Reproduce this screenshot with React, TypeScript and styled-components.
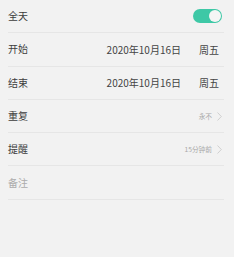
import * as React from 'react'
import styled, { createGlobalStyle } from 'styled-components'

const Global = createGlobalStyle`
  html, body {
    margin: 0;
    padding: 0;
    background: #f2f2f2;
  }
  body {
    font-family: "Noto Sans CJK SC", "Noto Sans", sans-serif;
  }
`

const Page = styled.div`
  width: 234px;
  height: 257px;
  background: #f2f2f2;
  padding: 0 10px 0 8px;
  box-sizing: border-box;
`

const Row = styled.div`
  height: 33.3px;
  box-sizing: border-box;
  border-bottom: 1px solid #e6e6e6;
  display: flex;
  align-items: center;
  justify-content: space-between;
  padding-right: 2px;
`

const Label = styled.span<{ $muted?: boolean }>`
  font-size: 10px;
  line-height: 1;
  color: ${(p) => (p.$muted ? '#acacac' : '#3d3d3d')};
`

const Value = styled.div`
  display: flex;
  align-items: center;
  gap: 18px;
  font-size: 10px;
  color: #444;
  padding-right: 3px;
`

const Hint = styled.div`
  display: flex;
  align-items: center;
  gap: 5px;
  font-size: 6.7px;
  color: #a8a8a8;
`

const Toggle = styled.div`
  width: 29px;
  height: 14px;
  border-radius: 7px;
  background: #3ec8a6;
  position: relative;
  &::after {
    content: '';
    position: absolute;
    right: 1px;
    top: 1px;
    width: 12px;
    height: 12px;
    border-radius: 50%;
    background: #f5f5f5;
  }
`

function Chevron() {
  return (
    <svg width="5" height="9" viewBox="0 0 5 9">
      <path d="M0.5 0.5 L4.3 4.5 L0.5 8.5" fill="none" stroke="#c6c6c6" strokeWidth="0.8" />
    </svg>
  )
}

export default function App() {
  return (
    <Page>
      <Global />
      <Row>
        <Label>全天</Label>
        <Toggle />
      </Row>
      <Row>
        <Label>开始</Label>
        <Value>
          <span>2020年10月16日</span>
          <span>周五</span>
        </Value>
      </Row>
      <Row>
        <Label>结束</Label>
        <Value>
          <span>2020年10月16日</span>
          <span>周五</span>
        </Value>
      </Row>
      <Row>
        <Label>重复</Label>
        <Hint>
          <span>永不</span>
          <Chevron />
        </Hint>
      </Row>
      <Row>
        <Label>提醒</Label>
        <Hint>
          <span>15分钟前</span>
          <Chevron />
        </Hint>
      </Row>
      <Row>
        <Label $muted>备注</Label>
      </Row>
    </Page>
  )
}
